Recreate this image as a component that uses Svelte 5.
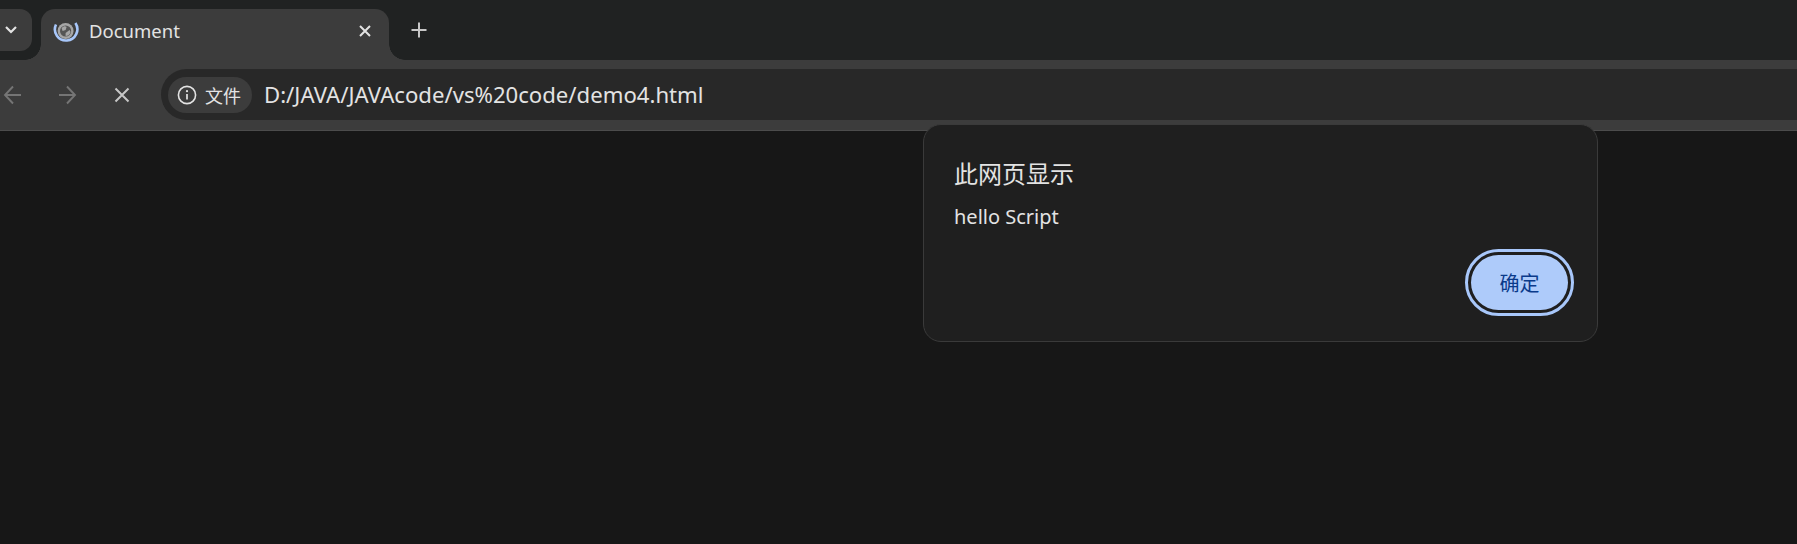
<script>
  // Chrome window with a native alert over an empty page
  const url = "D:/JAVA/JAVAcode/vs%20code/demo4.html";
</script>

<div class="window">
  <div class="tabstrip">
    <div class="tab-search">
      <svg width="14" height="10" viewBox="0 0 14 10"><path d="M2 2l5 5 5-5" fill="none" stroke="#e3e3e3" stroke-width="2.2"/></svg>
    </div>
    <div class="tab">
      <svg class="favicon" width="26" height="26" viewBox="0 0 26 26">
        <circle cx="12.6" cy="13" r="8" fill="#a6a6a6"/>
        <circle cx="12.6" cy="13" r="5.6" fill="#555"/>
        <path d="M8.6 10c2-2 4-2 5-1l-1 3-3 1zM12.6 15l4-3 1 2c-1 3-3 4-5 4z" fill="#a6a6a6"/>
        <path d="M3 6.5A11.2 11.2 0 1 0 22.4 5" fill="none" stroke="#a8c7fa" stroke-width="2.6"/>
      </svg>
      <span class="tab-title">Document</span>
      <svg class="tab-close" width="14" height="14" viewBox="0 0 14 14"><path d="M2 2l10 10M12 2L2 12" stroke="#e3e3e3" stroke-width="2"/></svg>
    </div>
    <svg class="new-tab" width="18" height="18" viewBox="0 0 18 18"><path d="M9 1.5v15M1.5 9h15" stroke="#c7c7c7" stroke-width="2"/></svg>
  </div>

  <div class="toolbar">
    <svg class="nav" width="20" height="20" viewBox="0 0 20 20"><path d="M18 10H2M10 1.5L2 10l8 8.5" fill="none" stroke="#757575" stroke-width="1.9"/></svg>
    <svg class="nav" width="20" height="20" viewBox="0 0 20 20"><path d="M2 10h16M10 1.5l8 8.5-8 8.5" fill="none" stroke="#757575" stroke-width="1.9"/></svg>
    <svg class="nav" width="16" height="16" viewBox="0 0 16 16"><path d="M1.5 1.5l13 13M14.5 1.5l-13 13" stroke="#c7c7c7" stroke-width="2"/></svg>
    <div class="omnibox">
      <div class="chip">
        <svg width="20" height="20" viewBox="0 0 20 20">
          <circle cx="10" cy="10" r="8.6" fill="none" stroke="#e3e3e3" stroke-width="1.6"/>
          <path d="M10 9v5.5" stroke="#e3e3e3" stroke-width="1.7"/>
          <circle cx="10" cy="6.2" r="1.1" fill="#e3e3e3"/>
        </svg>
        <span>文件</span>
      </div>
      <span class="url">{url}</span>
    </div>
  </div>

  <main class="page">
    <div class="dialog">
      <div class="dialog-title">此网页显示</div>
      <div class="dialog-msg">hello Script</div>
      <div class="dialog-actions">
        <button class="ok">确定</button>
      </div>
    </div>
  </main>
</div>

<style>
  :global(body) {
    background: #171717;
  }

  .window {
    height: 544px;
    display: flex;
    flex-direction: column;
    overflow: hidden;
    font-family: "Noto Sans", "Noto Sans CJK SC", sans-serif;
  }

  .tabstrip {
    height: 60px;
    flex: none;
    background: #202222;
    display: flex;
    align-items: flex-end;
  }

  .tab-search {
    width: 32px;
    height: 42px;
    margin-bottom: 9px;
    background: #3c3c3c;
    border-radius: 0 12px 12px 0;
    display: flex;
    align-items: center;
    padding-left: 4px;
    box-sizing: border-box;
  }

  .tab {
    position: relative;
    margin-left: 9px;
    width: 348px;
    height: 51px;
    box-sizing: border-box;
    background: #3c3c3c;
    border-radius: 14px 14px 0 0;
    display: flex;
    align-items: center;
    padding: 0 17px 7px 12px;
  }

  /* flared bottom corners of the active tab */
  .tab::before,
  .tab::after {
    content: "";
    position: absolute;
    bottom: 0;
    width: 16px;
    height: 16px;
  }

  .tab::before {
    left: -16px;
    background: radial-gradient(circle at 0 0, transparent 15.5px, #3c3c3c 16px);
  }

  .tab::after {
    right: -16px;
    background: radial-gradient(circle at 100% 0, transparent 15.5px, #3c3c3c 16px);
  }

  .favicon {
    flex: none;
  }

  .tab-title {
    margin: 0 0 2px 10px;
    flex: 1;
    color: #e3e3e3;
    font-size: 18.5px;
  }

  .new-tab {
    margin: 0 0 21px 21px;
  }

  .toolbar {
    height: 71px;
    flex: none;
    box-sizing: border-box;
    background: #3c3c3c;
    border-bottom: 1px solid #4c4c4c;
    display: flex;
    align-items: center;
    padding: 0 0 1px 0;
    position: relative;
  }

  .nav:nth-child(1) {
    margin-left: 3px;
  }

  .nav:nth-child(2) {
    margin-left: 34px;
  }

  .nav:nth-child(3) {
    margin-left: 37px;
  }

  .omnibox {
    margin-left: 31px;
    flex: 1;
    height: 51px;
    background: #282828;
    border-radius: 26px 0 0 26px;
    display: flex;
    align-items: center;
    padding-left: 7px;
  }

  .chip {
    height: 36px;
    width: 84px;
    box-sizing: border-box;
    background: #3c3c3c;
    border-radius: 18px;
    display: flex;
    align-items: center;
    padding-left: 9px;
    gap: 8px;
    color: #e3e3e3;
    font-size: 18px;
  }

  .url {
    margin: 0 0 2px 12px;
    color: #e3e3e3;
    font-size: 22.15px;
  }

  .page {
    flex: 1;
    background: #171717;
    position: relative;
  }

  .dialog {
    position: absolute;
    left: 923px;
    top: -7px;
    width: 675px;
    height: 218px;
    box-sizing: border-box;
    background: #1f1f1f;
    border: 1px solid #3a3a3a;
    border-radius: 18px;
    padding: 34px 29px 31px 30px;
    display: flex;
    flex-direction: column;
    color: #e3e3e3;
  }

  .dialog-title {
    font-size: 24px;
    line-height: 30px;
  }

  .dialog-msg {
    font-size: 20px;
    line-height: 28px;
    margin-top: 14px;
  }

  .dialog-actions {
    margin-top: auto;
    display: flex;
    justify-content: flex-end;
  }

  .ok {
    width: 97px;
    height: 55px;
    border: none;
    border-radius: 28px;
    background: #aecbfa;
    color: #0a3a8a;
    font: inherit;
    font-size: 20px;
    outline: 3px solid #a8c7fa;
    outline-offset: 3px;
  }
</style>
